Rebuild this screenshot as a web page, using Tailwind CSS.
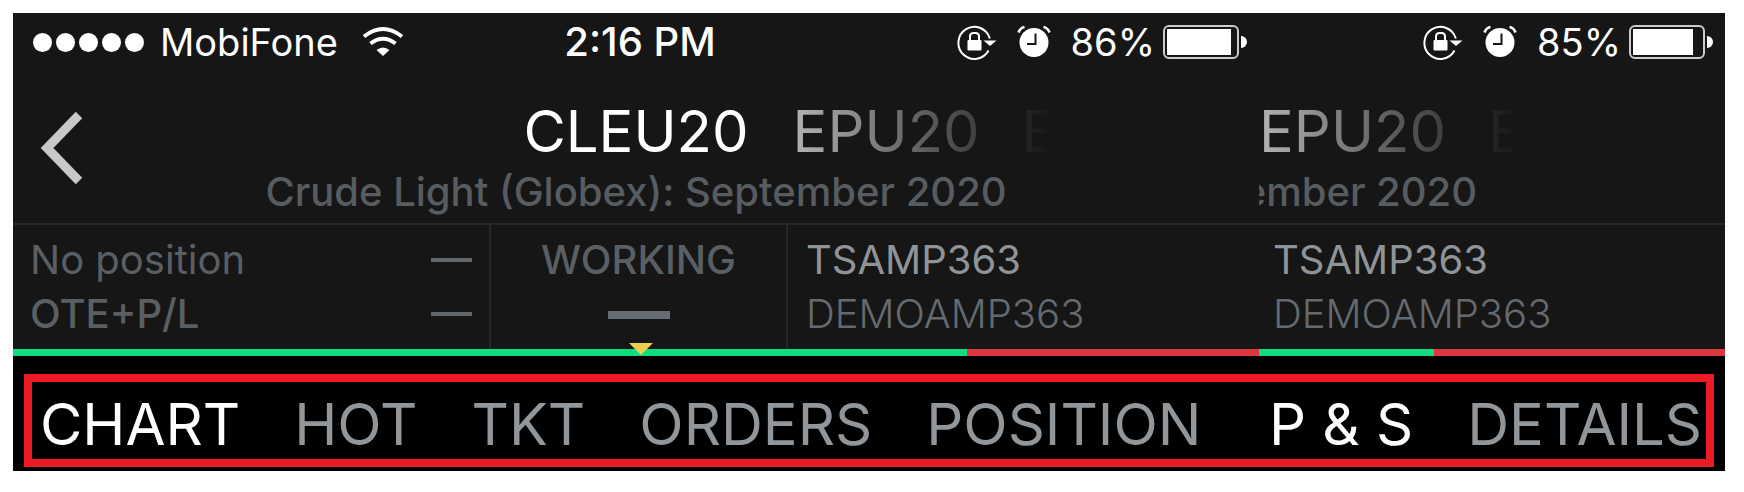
<!DOCTYPE html>
<html lang="en">
<head>
<meta charset="UTF-8">
<meta name="viewport" content="width=device-width, initial-scale=1.0">
<title>CLEU20</title>
<script src="https://cdn.jsdelivr.net/npm/@tailwindcss/browser@4"></script>
</head>
<body class="bg-white font-['Inter',sans-serif] text-[40px] leading-[54px]">

<!-- Shared icons -->
<svg class="hidden">
<symbol id="rotation-lock" viewBox="0 0 40 36">
<path d="M31.500 26.500A16 16 0 1 1 32.800 14.500" fill="none" stroke="#fff" stroke-width="2"/>
<path d="M26.500 16.500h13L33 22z" fill="#fff"/>
<rect x="10.500" y="16" width="14" height="10.500" rx="1" fill="#fff"/>
<path d="M13 17v-4.500q0-3.500 3.500-3.500h2q3.500 0 3.500 3.500V17" fill="none" stroke="#fff" stroke-width="2"/>
</symbol>
<symbol id="alarm" viewBox="0 0 34 36">
<circle cx="17" cy="18.500" r="14.500" fill="#fff"/>
<path d="M1.500 8.500Q3 4 7.500 3M32.500 8.500Q31 4 26.500 3" fill="none" stroke="#fff" stroke-width="2.500"/>
<path d="M18.500 9.500v10.500h-8.500" fill="none" stroke="#161616" stroke-width="2"/>
</symbol>
</svg>

<main class="mt-[13px] ml-[13px] mr-[19px] bg-[#161616] pt-0.5">
<div class="flex">

<!-- Left screen -->
<section class="min-w-0 flex-1">
<div class="grid grid-cols-[1fr_auto_1fr] items-center text-[38px] leading-[54px] text-white">
<div class="flex items-center pl-5">
<div class="flex gap-1">
<i class="size-[19px] rounded-full bg-white"></i><i class="size-[19px] rounded-full bg-white"></i><i class="size-[19px] rounded-full bg-white"></i><i class="size-[19px] rounded-full bg-white"></i><i class="size-[19px] rounded-full bg-white"></i>
</div>
<span class="ml-4">MobiFone</span>
<svg class="ml-6 h-8 w-[42px]" viewBox="0 0 42 32" fill="none" stroke="#fff" stroke-width="4">
<path d="M2 10.500Q21-4.500 40 10.500"/>
<path d="M8.500 17.500Q21 8 33.500 17.500"/>
<path d="M14.500 24Q21 19 27.500 24L21 30z" fill="#fff" stroke="none"/>
</svg>
</div>
<span class="pl-2 text-[40px] leading-[54px] font-medium">2:16 PM</span>
<div class="flex items-center justify-end pr-3">
<svg class="h-9 w-10"><use href="#rotation-lock"/></svg>
<svg class="ml-5 h-9 w-[34px]"><use href="#alarm"/></svg>
<span class="ml-5">86%</span>
<div class="ml-2 flex h-[34px] w-[76px] rounded-md border-2 border-[#ccc] p-0.5"><i class="w-[64px] bg-white"></i></div>
<i class="ml-0.5 h-3 w-1.5 rounded-r-full bg-white"></i>
</div>
</div>

<div class="grid grid-cols-[1fr_auto_1fr] pt-[26px] text-[58px] leading-[72px]">
<div class="pl-[27px]">
<button class="block h-[72px] pt-[15px]" aria-label="Back">
<svg class="h-[76px] w-12" viewBox="0 0 48 76" fill="none" stroke="#c8c8c8" stroke-width="9"><path d="M39 5L7 38L39 71"/></svg>
</button>
</div>
<h1 class="text-white">CLEU20</h1>
<div class="pl-11">
<div class="flex w-[254px] gap-[42px] overflow-hidden bg-linear-to-r from-[#b4b4b4] to-[#191919] bg-clip-text text-transparent">
<span>EPU20</span><span>E</span>
</div>
</div>
<p class="col-span-3 -mt-0.5 text-center text-[40px] font-medium leading-[54px] text-[#575c61]">Crude Light (Globex): September 2020</p>
</div>

<div class="mt-1 grid grid-cols-[476px_299px_1fr] border-t-2 border-[#272727] text-[#5a5f64]">
<div class="px-[17px] pt-2 pb-2">
<p class="flex items-center justify-between">No position<i class="h-1 w-[41px] bg-[#60666b]"></i></p>
<p class="flex items-center justify-between font-medium">OTE+P/L<i class="h-1 w-[41px] bg-[#60666b]"></i></p>
</div>
<div class="border-x-2 border-[#272727] pt-2 text-center">
<p class="font-medium">WORKING</p>
<i class="mx-auto mt-6 block h-2 w-[62px] bg-[#656b72]"></i>
</div>
<div class="pt-2 pl-[18px]">
<p class="text-[#8f9499]">TSAMP363</p>
<p class="font-light text-[#646a6f]">DEMOAMP363</p>
</div>
</div>
<div class="relative flex h-[7px]">
<i class="w-[954px] bg-[#0fdc7e]"></i><i class="flex-1 bg-[#dc3640]"></i>
<svg class="absolute -top-1.5 left-[616px] h-3 w-6" viewBox="0 0 24 12"><path d="M0 0h24L12 12z" fill="#efcd4e"/></svg>
</div>
</section>

<!-- Right screen -->
<section class="w-[466px]">
<div class="flex items-center justify-end pr-3 text-[38px] leading-[54px] text-white">
<svg class="h-9 w-10"><use href="#rotation-lock"/></svg>
<svg class="ml-5 h-9 w-[34px]"><use href="#alarm"/></svg>
<span class="ml-5">85%</span>
<div class="ml-2 flex h-[34px] w-[76px] rounded-md border-2 border-[#ccc] p-0.5"><i class="w-[60px] bg-white"></i></div>
<i class="ml-0.5 h-3 w-1.5 rounded-r-full bg-white"></i>
</div>
<div class="pt-[26px]">
<div class="flex w-[254px] gap-[42px] overflow-hidden bg-linear-to-r from-[#b4b4b4] to-[#191919] bg-clip-text text-[58px] leading-[72px] text-transparent">
<span>EPU20</span><span>E</span>
</div>
<p class="-mt-0.5 flex w-[218px] justify-end overflow-hidden whitespace-nowrap font-medium text-[#575c61]">ember 2020</p>
</div>
<div class="mt-1 border-t-2 border-[#272727] pt-2 pb-2 pl-[14px]">
<p class="text-[#8f9499]">TSAMP363</p>
<p class="font-light text-[#646a6f]">DEMOAMP363</p>
</div>
<div class="flex h-[7px]">
<i class="w-[175px] bg-[#0fdc7e]"></i><i class="flex-1 bg-[#dc3640]"></i>
</div>
</section>
</div>

<!-- Tabs -->
<div class="bg-black px-[11px] pt-[18px] pb-1">
<nav class="flex justify-between border-8 border-[#ed1c24] px-1 pt-2 pb-px text-[58px] leading-[68px] text-[#91969b]">
<div class="flex gap-[54px] pl-1">
<button class="text-white">CHART</button>
<button>HOT</button>
<button>TKT</button>
<button>ORDERS</button>
<button>POSITION</button>
</div>
<div class="flex gap-[54px]">
<button class="text-white">P &amp; S</button>
<button>DETAILS</button>
</div>
</nav>
</div>
</main>

</body>
</html>
